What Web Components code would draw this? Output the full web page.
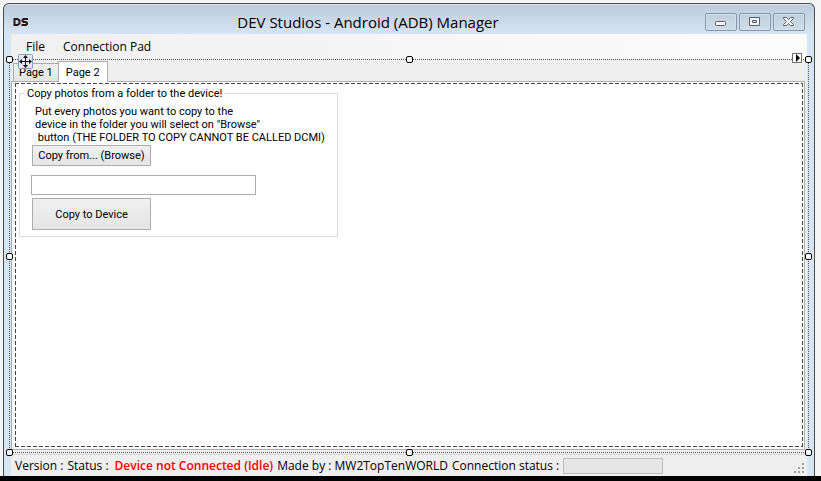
<!DOCTYPE html>
<html lang="en">
<head>
<meta charset="utf-8">
<title>DEV Studios - Android (ADB) Manager</title>
<style>
    :root {
        --face: #efefef;
        --line: #acacac;
        --ui-font: "Open Sans", "Noto Sans", sans-serif;
        --form-font: Roboto, "Liberation Sans", sans-serif;
    }

    body {
        margin: 0;
        height: 100vh;
        display: flex;
        flex-direction: column;
        background: #f5f5f5;
        color: #000;
        font: 12px/16px var(--ui-font);
        overflow: hidden;
    }
</style>
</head>
<body>
<app-window>
    <title-bar slot="title">DEV Studios - Android (ADB) Manager</title-bar>
    <menu-strip></menu-strip>
    <tab-control>
        <group-box heading="Copy photos from a folder to the device!">
            <copy-form></copy-form>
        </group-box>
    </tab-control>
    <status-strip></status-strip>
</app-window>

<script>
class BaseElement extends HTMLElement {
    constructor() {
        super();
        this.attachShadow({mode: 'open'});
    }

    connectedCallback() {
        this.render();
    }

    render() {
        this.shadowRoot.innerHTML = `
            <style>
                :host, *, *::before, *::after {
                    box-sizing: border-box;
                }
                * {
                    margin: 0;
                    padding: 0;
                }
                button, input {
                    font: inherit;
                    color: inherit;
                }
                ${this.css()}
            </style>
            ${this.html()}
        `;
    }
}

class AppWindow extends BaseElement {
    html() {
        return `
            <div id="frame">
                <slot name="title"></slot>
                <main><slot></slot></main>
            </div>
        `;
    }

    css() {
        return `
            :host {
                flex: 1;
                min-height: 0;
                display: flex;
                padding: 3px 6px 0 3px;
                border-bottom: 5px solid #000;
            }
            #frame {
                flex: 1;
                min-width: 0;
                display: flex;
                flex-direction: column;
                padding: 0 7px;
                border: 1px solid #4c4c4c;
                border-bottom: none;
                border-radius: 6px 6px 0 0;
                background: linear-gradient(#bccbda, #d7e4f2 30px);
                box-shadow: inset 0 1px #dbe4ed;
            }
            main {
                flex: 1;
                min-height: 0;
                display: flex;
                flex-direction: column;
                background: var(--face);
            }
        `;
    }
}

class TitleBar extends BaseElement {
    html() {
        return `
            <svg id="logo" width="18" height="10" viewBox="0 0 18 10" fill="none" stroke="#2b1717" stroke-width="2" aria-hidden="true">
                <path d="M1.500 2H4.500L6.500 3.500V6.500L4.500 8H1.500Z"/>
                <path d="M15 2H10.500L9.500 3V4L10.500 5H13L14 6V7L13 8H8.500"/>
            </svg>
            <h1><slot></slot></h1>
            <nav>
                <button aria-label="Minimize">
                    <svg width="12" height="12" viewBox="0 0 12 12"><rect x=".5" y="5.500" width="10" height="4" rx="1" fill="#f5f5f5" stroke="#5a6070"/></svg>
                </button>
                <button aria-label="Maximize">
                    <svg width="12" height="12" viewBox="0 0 12 12" fill="#f5f5f5" stroke="#5a6070"><path d="M.5 1.500h10v8h-10z"/><path d="M3.500 4.500h4v2h-4z" fill="#c5d2e1"/></svg>
                </button>
                <button aria-label="Close">
                    <svg width="12" height="12" viewBox="0 0 12 12"><path d="M.5 1.500h3l2 2 2-2h3v1L7.500 5.500l3 3v1h-3l-2-2-2 2h-3v-1l3-3-3-3z" fill="#f5f5f5" stroke="#5a6070"/></svg>
                </button>
            </nav>
        `;
    }

    css() {
        return `
            :host {
                display: grid;
                grid-template-columns: auto 1fr auto;
                align-items: center;
                height: 30px;
                padding: 6px 2px 0;
            }
            h1 {
                font-size: 15px;
                line-height: 20px;
                font-weight: 400;
                text-align: center;
            }
            nav {
                display: flex;
                gap: 2px;
            }
            button {
                display: grid;
                place-items: center;
                width: 32px;
                height: 18px;
                border: 1px solid #8795ae;
                border-radius: 2px;
                background: linear-gradient(#c1cfdd, #cfdcea);
                box-shadow: inset 0 0 0 1px #d5e0ec;
            }
        `;
    }
}

class MenuStrip extends BaseElement {
    html() {
        return `
            <button>File</button>
            <button>Connection Pad</button>
        `;
    }

    css() {
        return `
            :host {
                display: flex;
                gap: 18px;
                height: 25px;
                padding: 0 15px;
                background: linear-gradient(90deg, #f0f0f0, #fcfcfc);
            }
            button {
                border: none;
                background: none;
            }
        `;
    }
}

class TabControl extends BaseElement {
    html() {
        return `
            <div id="tabs" role="tablist">
                <button role="tab" aria-selected="false">Page 1</button>
                <button role="tab" aria-selected="true">Page 2</button>
            </div>
            <div id="page" role="tabpanel">
                <div id="surface"><slot></slot></div>
            </div>
            <selection-frame></selection-frame>
        `;
    }

    css() {
        return `
            :host {
                flex: 1;
                min-height: 0;
                position: relative;
                display: flex;
                flex-direction: column;
                padding: 2px 2px 4px 0;
            }
            #tabs {
                display: flex;
                align-items: flex-end;
                padding-left: 2px;
                font: 11px/13px var(--form-font);
            }
            button {
                height: 18px;
                padding: 0 5px;
                border: 1px solid var(--line);
                border-bottom: none;
                background: linear-gradient(#f0f0f0, #e5e5e5);
            }
            button[aria-selected="true"] {
                height: 21px;
                padding: 0 7px;
                margin-left: -1px;
                margin-bottom: -1px;
                z-index: 1;
                background: #fff;
            }
            #page {
                flex: 1;
                min-height: 0;
                display: flex;
                padding: 1px 1px 2px 3px;
                border: 1px solid var(--line);
                background: #fff;
            }
            #surface {
                flex: 1;
                padding: 4px;
                --dash: #444 0 4px, transparent 4px 6px;
                background:
                    repeating-linear-gradient(90deg, var(--dash)) top / 100% 1px no-repeat,
                    repeating-linear-gradient(90deg, var(--dash)) bottom / 100% 1px no-repeat,
                    repeating-linear-gradient(var(--dash)) left / 1px 100% no-repeat,
                    repeating-linear-gradient(var(--dash)) right / 1px 100% no-repeat;
            }
            selection-frame {
                position: absolute;
                inset: 0 -2px 1px;
                z-index: 2;
            }
        `;
    }
}

// Designer outline with the grab handles, laid over the selected control
class SelectionFrame extends BaseElement {
    html() {
        return `
            <i class="n w"></i><i class="n c"></i><i class="n e"></i>
            <i class="m w"></i><i class="m e"></i>
            <i class="s w"></i><i class="s c"></i><i class="s e"></i>
            <svg id="move" width="15" height="15" viewBox="0 0 15 15" aria-hidden="true">
                <rect x=".5" y=".5" width="14" height="14" rx="1" fill="#e3e9f4" stroke="#8c9cbb"/>
                <path d="M7.500 3v9M3 7.500h9" stroke="#111"/>
                <path d="M7.500 1L10 4H5zM7.500 14L10 11H5zM1 7.500L4 5V10zM14 7.500L11 5V10z" fill="#111"/>
            </svg>
            <svg id="task" width="10" height="10" viewBox="0 0 10 10" aria-hidden="true">
                <path d="M.5.5h9v9h-9z" fill="#fff" stroke="#6b6b62"/>
                <path d="M4 1v8l4-4z"/>
            </svg>
        `;
    }

    css() {
        return `
            :host {
                display: block;
                pointer-events: none;
                --dot: #555 0 1px, transparent 1px 2px;
                background:
                    repeating-linear-gradient(90deg, var(--dot)) top / 100% 1px no-repeat,
                    repeating-linear-gradient(90deg, var(--dot)) bottom / 100% 1px no-repeat,
                    repeating-linear-gradient(var(--dot)) left / 1px 100% no-repeat,
                    repeating-linear-gradient(var(--dot)) right / 1px 100% no-repeat;
            }
            i {
                position: absolute;
                width: 7px;
                height: 7px;
                border: 1px solid #000;
                border-radius: 2px;
                background: #fff;
            }
            .n { top: -3px; }
            .m { top: calc(50% - 3px); }
            .s { bottom: -3px; }
            .w { left: -3px; }
            .c { left: calc(50% - 3px); }
            .e { right: -3px; }
            #move {
                position: absolute;
                top: -5px;
                left: 9px;
            }
            #task {
                position: absolute;
                top: -6px;
                right: 7px;
            }
        `;
    }
}

class GroupBox extends BaseElement {
    html() {
        return `
            <fieldset>
                <legend>${this.getAttribute('heading')}</legend>
                <slot></slot>
            </fieldset>
        `;
    }

    css() {
        return `
            :host {
                display: block;
                width: fit-content;
                font: 11px/13px var(--form-font);
            }
            fieldset {
                min-width: 319px;
                padding: 5px 3px 6px 11px;
                border: 1px solid #dcdcdc;
            }
            legend {
                margin-left: -6px;
                padding: 0 2px;
            }
        `;
    }
}

class CopyForm extends BaseElement {
    html() {
        return `
            <label for="folder">Put every photos you want to copy to the
device in the folder you will select on "Browse"
 button (THE FOLDER TO COPY CANNOT BE CALLED DCMI)</label>
            <button type="button">Copy from... (Browse)</button>
            <input id="folder" type="text">
            <button type="button" class="tall">Copy to Device</button>
        `;
    }

    css() {
        return `
            :host {
                display: flex;
                flex-direction: column;
                align-items: flex-start;
            }
            label {
                padding: 0 0 1px 4px;
                white-space: pre;
            }
            button {
                width: 119px;
                height: 21px;
                margin-left: 1px;
                border: 1px solid var(--line);
                background: linear-gradient(#f0f0f0, #e5e5e5);
            }
            input {
                width: 225px;
                height: 20px;
                margin: 9px 0 3px;
                padding: 0 3px;
                border: 1px solid var(--line);
                background: #fff;
            }
            .tall {
                height: 32px;
            }
        `;
    }
}

class StatusStrip extends BaseElement {
    html() {
        return `
            <span>Version :</span>
            <span>Status :</span>
            <strong>Device not Connected (Idle)</strong>
            <span>Made by : MW2TopTenWORLD</span>
            <span id="connection">Connection status :</span>
            <div id="meter" role="progressbar" aria-labelledby="connection"></div>
            <svg width="11" height="11" viewBox="0 0 11 11" fill="#a0a0a0" aria-hidden="true">
                <path d="M8 0h2v2h-2zM4 4h2v2h-2zM8 4h2v2h-2zM0 8h2v2h-2zM4 8h2v2h-2zM8 8h2v2h-2z"/>
            </svg>
        `;
    }

    css() {
        return `
            :host {
                display: flex;
                align-items: center;
                gap: 4px;
                height: 22px;
                padding: 0 2px 0 4px;
                border-top: 1px solid #d9d9d9;
                white-space: nowrap;
            }
            strong {
                padding-left: 2px;
                font-weight: 600;
                color: #f00;
            }
            #meter {
                width: 100px;
                height: 16px;
                border: 1px solid #bcbcbc;
                background: #e6e6e6;
            }
            svg {
                margin-left: auto;
                align-self: flex-end;
                margin-bottom: 2px;
            }
        `;
    }
}

customElements.define('app-window', AppWindow);
customElements.define('title-bar', TitleBar);
customElements.define('menu-strip', MenuStrip);
customElements.define('selection-frame', SelectionFrame);
customElements.define('tab-control', TabControl);
customElements.define('group-box', GroupBox);
customElements.define('copy-form', CopyForm);
customElements.define('status-strip', StatusStrip);
</script>
</body>
</html>
